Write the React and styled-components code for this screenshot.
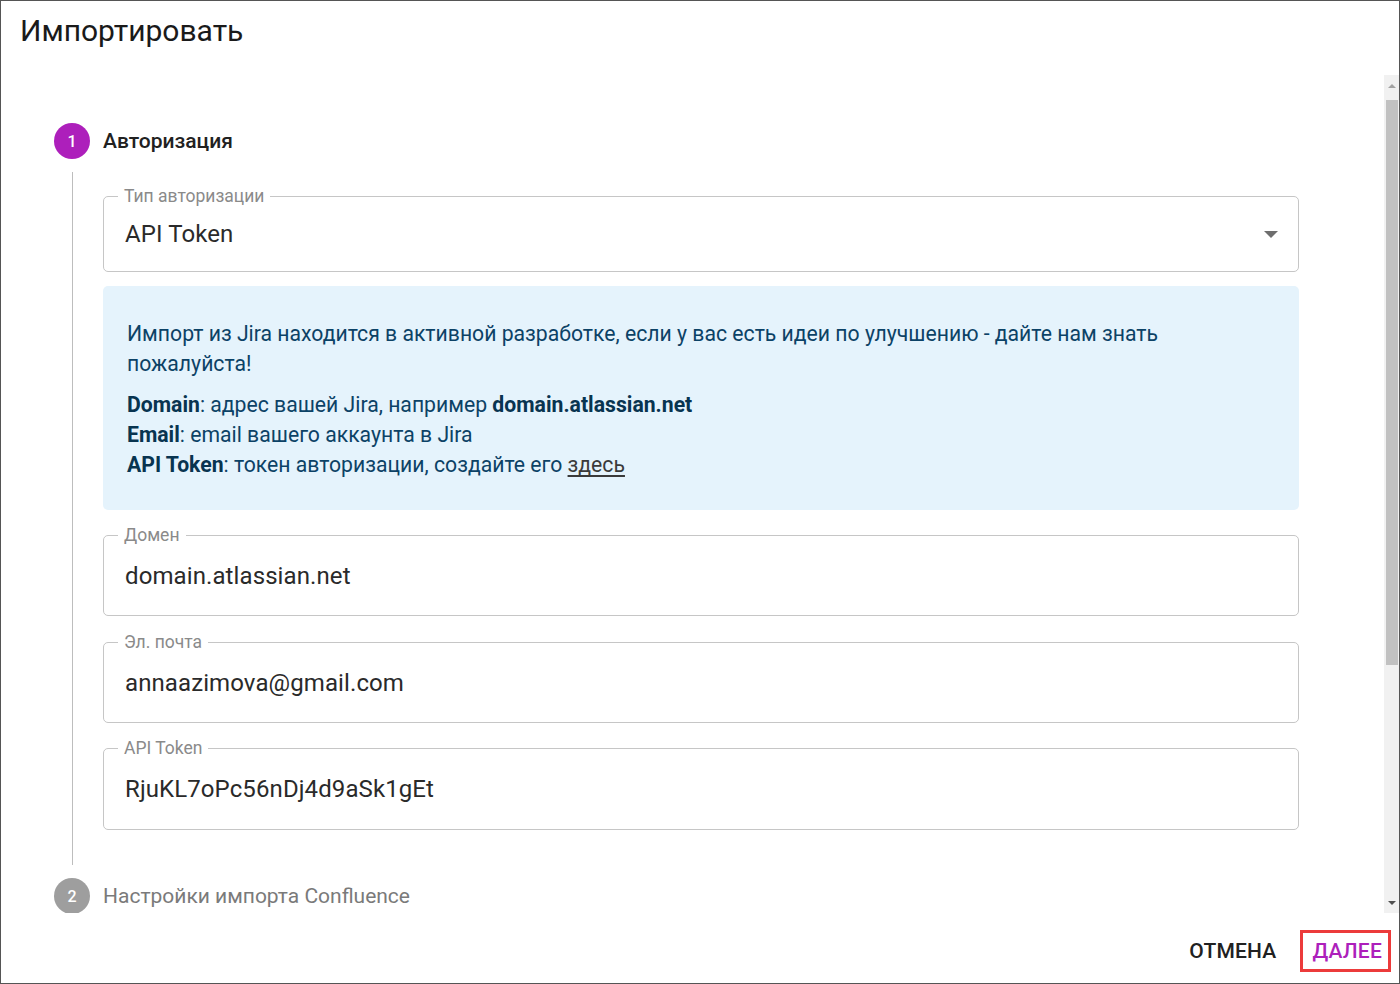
import React from "react";
import styled, { createGlobalStyle } from "styled-components";

const GlobalStyle = createGlobalStyle`
  html, body {
    margin: 0;
    padding: 0;
    background: #ffffff;
  }
  * {
    box-sizing: border-box;
  }
`;

const Dialog = styled.div`
  width: 1400px;
  height: 984px;
  border: 1px solid #555555;
  background: #ffffff;
  display: flex;
  flex-direction: column;
  font-family: Roboto, "Noto Sans", sans-serif;
  color: #212121;
  overflow: hidden;
`;

const Title = styled.h2`
  margin: 0;
  height: 74px;
  padding: 11px 0 0 19px;
  font-size: 30px;
  font-weight: 400;
  line-height: 38px;
  color: #1a1a1a;
  flex-shrink: 0;
`;

const ContentRow = styled.div`
  flex: 1;
  display: flex;
  min-height: 0;
`;

const Content = styled.div`
  flex: 1;
  padding: 48px 85px 0 53px;
  overflow: hidden;
`;

const Scrollbar = styled.div`
  width: 15px;
  display: flex;
  flex-direction: column;
  background: #f1f1f1;
`;

const ScrollArrow = styled.div`
  height: 25px;
  display: flex;
  align-items: ${(p) => (p.$down ? "flex-end" : "flex-start")};
  justify-content: center;
  padding: ${(p) => (p.$down ? "0 0 8px" : "9px 0 0")};
  &::before {
    content: "";
    border-left: 4px solid transparent;
    border-right: 4px solid transparent;
    ${(p) =>
      p.$down
        ? "border-top: 4px solid #505050;"
        : "border-bottom: 4px solid #a3a3a3;"}
  }
`;

const ScrollThumb = styled.div`
  height: 565px;
  margin: 0 1px 0 2px;
  background: #c1c1c1;
`;

const ScrollTrack = styled.div`
  flex: 1;
`;

const StepHeader = styled.div`
  display: flex;
  align-items: center;
  gap: 13px;
  height: 36px;
`;

const StepIcon = styled.div`
  width: 36px;
  height: 36px;
  border-radius: 50%;
  background: ${(p) => (p.$active ? "#ad1fbb" : "#9e9e9e")};
  color: #ffffff;
  font-size: 16px;
  font-weight: 500;
  display: flex;
  align-items: center;
  justify-content: center;
`;

const StepLabel = styled.span`
  font-size: 21px;
  font-weight: ${(p) => (p.$active ? 500 : 400)};
  color: ${(p) => (p.$active ? "#212121" : "#7a7a7a")};
`;

const StepBody = styled.div`
  margin: 13px 0 13px 18px;
  border-left: 1.5px solid #bdbdbd;
  padding: 24px 0 35px 30px;
  display: flex;
  flex-direction: column;
`;

const Field = styled.div`
  position: relative;
  margin-bottom: ${(p) => p.$gap || 0}px;
  padding: 0 20px 0 21px;
  height: ${(p) => p.$height}px;
  border: 1.5px solid #c6c6c6;
  border-radius: 5px;
  display: flex;
  align-items: center;
  justify-content: space-between;
`;

const Label = styled.label`
  position: absolute;
  top: -11px;
  left: 14px;
  padding: 0 6px;
  background: #ffffff;
  font-size: 17.5px;
  line-height: 20px;
  color: #8a8a8a;
`;

const Value = styled.span`
  font-size: 24px;
  color: #2a2a2a;
  letter-spacing: 0.1px;
`;

const Caret = styled.span`
  width: 0;
  height: 0;
  border-left: 7.5px solid transparent;
  border-right: 7.5px solid transparent;
  border-top: 7px solid #6e6e6e;
  margin-top: 1px;
`;

const InfoBox = styled.div`
  background: #e5f3fc;
  border-radius: 5px;
  padding: 33px 24px 30px;
  margin: 14px 0 25px;
  color: #0c4266;
  font-size: 21.2px;
  line-height: 30px;
`;

const InfoPara = styled.p`
  margin: 0 0 ${(p) => p.$gap || 0}px;
  max-width: ${(p) => (p.$narrow ? "1100px" : "none")};
`;

const Strong = styled.b`
  font-weight: 700;
  color: #083450;
`;

const Link = styled.a`
  color: #3a3a3a;
  text-decoration: underline;
  text-underline-offset: 3px;
`;

const Actions = styled.div`
  height: 70px;
  flex-shrink: 0;
  display: flex;
  justify-content: flex-end;
  align-items: center;
  gap: 15px;
  padding: 6px 8px 0 0;
`;

const Button = styled.button`
  font-family: Roboto, "Noto Sans", sans-serif;
  font-size: 21px;
  font-weight: 500;
  letter-spacing: 0.2px;
  background: none;
  cursor: pointer;
  color: ${(p) => (p.$primary ? "#ad1fbb" : "#212121")};
  border: ${(p) => (p.$primary ? "3px solid #ec3b3b" : "3px solid transparent")};
  height: 42px;
  padding: 0 6px 0 9px;
`;

export default function App() {
  return (
    <>
      <GlobalStyle />
      <Dialog>
        <Title>Импортировать</Title>
        <ContentRow>
          <Content>
            <StepHeader>
              <StepIcon $active>1</StepIcon>
              <StepLabel $active>Авторизация</StepLabel>
            </StepHeader>
            <StepBody>
              <Field $height={76}>
                <Label>Тип авторизации</Label>
                <Value>API Token</Value>
                <Caret />
              </Field>
              <InfoBox>
                <InfoPara $gap={11} $narrow>
                  Импорт из Jira находится в активной разработке, если у вас есть
                  идеи по улучшению - дайте нам знать пожалуйста!
                </InfoPara>
                <InfoPara>
                  <Strong>Domain</Strong>: адрес вашей Jira, например{" "}
                  <Strong>domain.atlassian.net</Strong>
                </InfoPara>
                <InfoPara>
                  <Strong>Email</Strong>: email вашего аккаунта в Jira
                </InfoPara>
                <InfoPara>
                  <Strong>API Token</Strong>: токен авторизации, создайте его{" "}
                  <Link href="#">здесь</Link>
                </InfoPara>
              </InfoBox>
              <Field $height={81} $gap={26}>
                <Label>Домен</Label>
                <Value>domain.atlassian.net</Value>
              </Field>
              <Field $height={81} $gap={25}>
                <Label>Эл. почта</Label>
                <Value>annaazimova@gmail.com</Value>
              </Field>
              <Field $height={82}>
                <Label>API Token</Label>
                <Value>RjuKL7oPc56nDj4d9aSk1gEt</Value>
              </Field>
            </StepBody>
            <StepHeader>
              <StepIcon>2</StepIcon>
              <StepLabel>Настройки импорта Confluence</StepLabel>
            </StepHeader>
          </Content>
          <Scrollbar>
            <ScrollArrow />
            <ScrollThumb />
            <ScrollTrack />
            <ScrollArrow $down />
          </Scrollbar>
        </ContentRow>
        <Actions>
          <Button>ОТМЕНА</Button>
          <Button $primary>ДАЛЕЕ</Button>
        </Actions>
      </Dialog>
    </>
  );
}
